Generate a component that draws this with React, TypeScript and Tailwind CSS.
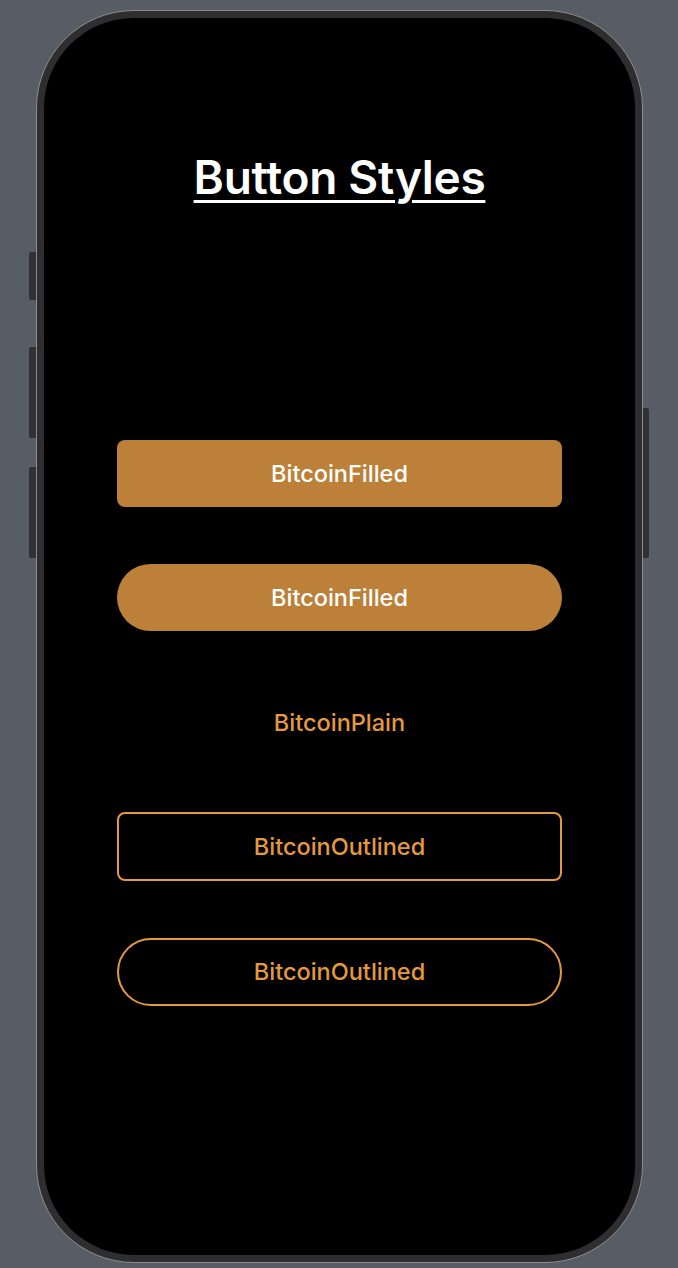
import React from "react";

const font = { fontFamily: "Inter, 'Noto Sans', sans-serif" };

export default function App() {
  return (
    <div className="w-[678px] h-[1268px] bg-[#585c64] relative overflow-hidden" style={font}>
      {/* side buttons */}
      <div className="absolute left-[29px] top-[252px] w-[8px] h-[48px] bg-[#303133] rounded-l-[2px]" />
      <div className="absolute left-[29px] top-[347px] w-[8px] h-[91px] bg-[#303133] rounded-l-[2px]" />
      <div className="absolute left-[29px] top-[467px] w-[8px] h-[91px] bg-[#303133] rounded-l-[2px]" />
      <div className="absolute left-[641px] top-[408px] w-[8px] h-[150px] bg-[#303133] rounded-r-[2px]" />

      <div className="absolute left-[36px] top-[10px] w-[607px] h-[1253px] rounded-[98px] bg-[#2e2e30] border border-[#8d8d8f] p-[7px]">
        <div className="w-full h-full rounded-[90px] bg-black flex flex-col items-center">
          <h1 className="mt-[132px] text-[46px] leading-[54px] font-semibold text-white underline decoration-[3px] underline-offset-[6px] tracking-[-0.3px] [font-feature-settings:'liga'_0,'calt'_0]">
            Button Styles
          </h1>
          <div className="mt-[236px] w-[445px] flex flex-col gap-[57px] text-[23.5px] font-medium">
            <div className="h-[67px] rounded-[8px] bg-[#bc8039] flex items-center justify-center text-white">
              BitcoinFilled
            </div>
            <div className="h-[67px] rounded-full bg-[#bc8039] flex items-center justify-center text-white">
              BitcoinFilled
            </div>
            <div className="h-[67px] flex items-center justify-center text-[#e5993f] pt-[2px]">
              BitcoinPlain
            </div>
            <div className="h-[69px] rounded-[8px] border-2 border-[#e5993f] flex items-center justify-center text-[#e5993f]">
              BitcoinOutlined
            </div>
            <div className="h-[68px] rounded-full border-2 border-[#e5993f] flex items-center justify-center text-[#e5993f]">
              BitcoinOutlined
            </div>
          </div>
        </div>
      </div>
    </div>
  );
}
